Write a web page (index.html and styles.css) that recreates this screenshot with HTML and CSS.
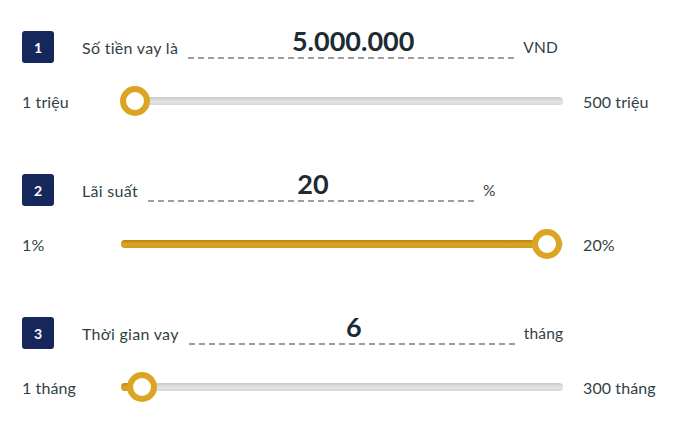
FILE: index.html
```html
<!DOCTYPE html>
<html lang="vi">
<head>
<meta charset="utf-8">
<link rel="stylesheet" href="styles.css">
</head>
<body>
<div class="calc">
  <section class="step">
    <div class="head">
      <span class="badge">1</span>
      <span class="label">Số tiền vay là</span>
      <span class="field">5.000.000</span>
      <span class="unit">VND</span>
    </div>
    <div class="range">
      <span class="min">1 triệu</span>
      <div class="track"><div class="fill" style="width:14px"></div><div class="thumb" style="left:14px"></div></div>
      <span class="max">500 triệu</span>
    </div>
  </section>
  <section class="step">
    <div class="head">
      <span class="badge">2</span>
      <span class="label">Lãi suất</span>
      <span class="field">20</span>
      <span class="unit">%</span>
    </div>
    <div class="range">
      <span class="min">1%</span>
      <div class="track"><div class="fill" style="width:426px"></div><div class="thumb" style="left:426px"></div></div>
      <span class="max">20%</span>
    </div>
  </section>
  <section class="step">
    <div class="head">
      <span class="badge">3</span>
      <span class="label">Thời gian vay</span>
      <span class="field">6</span>
      <span class="unit">tháng</span>
    </div>
    <div class="range">
      <span class="min">1 tháng</span>
      <div class="track"><div class="fill" style="width:21px"></div><div class="thumb" style="left:21px"></div></div>
      <span class="max">300 tháng</span>
    </div>
  </section>
</div>
</body>
</html>
```
FILE: styles.css
```css
html, body {
  margin: 0;
  padding: 0;
  background: #ffffff;
}
body {
  font-family: "Lato", "Noto Sans", sans-serif;
  color: #323f46;
}
.calc {
  padding: 31px 0 0 22px;
  display: flex;
  flex-direction: column;
  gap: 58px;
}
.step {
  display: flex;
  flex-direction: column;
  gap: 23px;
}
.head {
  display: flex;
  align-items: center;
  height: 32px;
}
.badge {
  width: 32px;
  height: 32px;
  border-radius: 3px;
  background: #16275c;
  color: #fff;
  font-weight: 700;
  font-size: 14px;
  display: flex;
  align-items: center;
  justify-content: center;
  flex: none;
}
.label {
  margin-left: 28px;
  font-size: 16px;
  letter-spacing: 0.3px;
}
.field {
  align-self: flex-start;
  margin-left: 10px;
  width: 330px;
  height: 20px;
  padding-bottom: 8px;
  text-align: center;
  font-size: 27px;
  font-weight: 700;
  color: #1d2b33;
  line-height: 20px;
  background: repeating-linear-gradient(to right, #9e9e9e 0 6px, transparent 6px 10px) left bottom / 100% 2px no-repeat;
}
.unit {
  margin-left: 5px;
  font-size: 15.5px;
  letter-spacing: 0.2px;
}
.range {
  display: flex;
  align-items: center;
  height: 30px;
}
.min {
  width: 99px;
  font-size: 16px;
  letter-spacing: 0.1px;
  flex: none;
}
.max {
  margin-left: 20px;
  font-size: 16px;
  letter-spacing: 0.1px;
}
.track {
  position: relative;
  width: 442px;
  height: 8px;
  border-radius: 4px;
  background: linear-gradient(#c9c9c9, #e4e4e4 60%, #d6d6d6);
}
.fill {
  height: 100%;
  border-radius: 4px;
  background: linear-gradient(#b8860e, #dba523 50%, #d39d1c);
}
.thumb {
  position: absolute;
  top: 50%;
  width: 18px;
  height: 18px;
  margin: -15px 0 0 -15px;
  border: 6px solid #dba523;
  border-radius: 50%;
  background: #fff;
}
```
